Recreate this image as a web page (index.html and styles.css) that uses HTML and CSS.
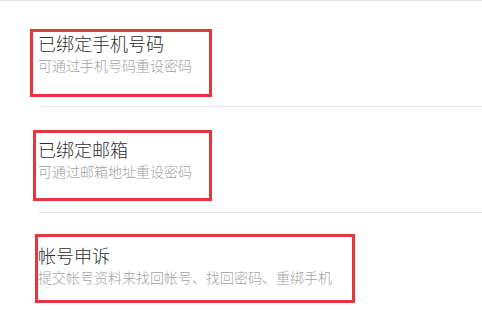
FILE: index.html
```html
<!DOCTYPE html>
<html lang="zh-CN">
<head>
<meta charset="utf-8">
<title>帐号安全</title>
<link rel="stylesheet" href="styles.css">
</head>
<body>
<div class="list">
  <div class="item">
    <div class="title">已绑定手机号码</div>
    <div class="sub">可通过手机号码重设密码</div>
    <span class="mark mark-1"></span>
  </div>
  <div class="item">
    <div class="title">已绑定邮箱</div>
    <div class="sub">可通过邮箱地址重设密码</div>
    <span class="mark mark-2"></span>
  </div>
  <div class="item last">
    <div class="title">帐号申诉</div>
    <div class="sub">提交帐号资料来找回帐号、找回密码、重绑手机</div>
    <span class="mark mark-3"></span>
  </div>
</div>
</body>
</html>
```

FILE: styles.css
```css
html, body {
  margin: 0;
  padding: 0;
  background: #ffffff;
  font-family: "Noto Sans CJK SC", "Noto Sans", sans-serif;
}

.list {
  border-top: 1px solid #e3e3e3;
  height: 309px;
  overflow: hidden;
}

.item {
  position: relative;
  margin-left: 38px;
  padding: 30px 0 31px 0;
  border-bottom: 1px solid #e8e8e8;
  display: flex;
  flex-direction: column;
}

.item.last {
  border-bottom: none;
}

.title {
  font-size: 18px;
  line-height: 24px;
  font-weight: 300;
  color: #2e2e2e;
}

.sub {
  font-size: 14px;
  line-height: 20px;
  font-weight: 300;
  color: #a3a3a3;
}

.mark {
  position: absolute;
  border: 3px solid #e6373d;
  box-sizing: border-box;
}

.mark-1 {
  left: -8px;
  top: 28px;
  width: 182px;
  height: 68px;
}

.mark-2 {
  left: -5px;
  top: 23px;
  width: 179px;
  height: 71px;
}

.mark-3 {
  left: -3px;
  top: 21px;
  width: 320px;
  height: 69px;
}
```
